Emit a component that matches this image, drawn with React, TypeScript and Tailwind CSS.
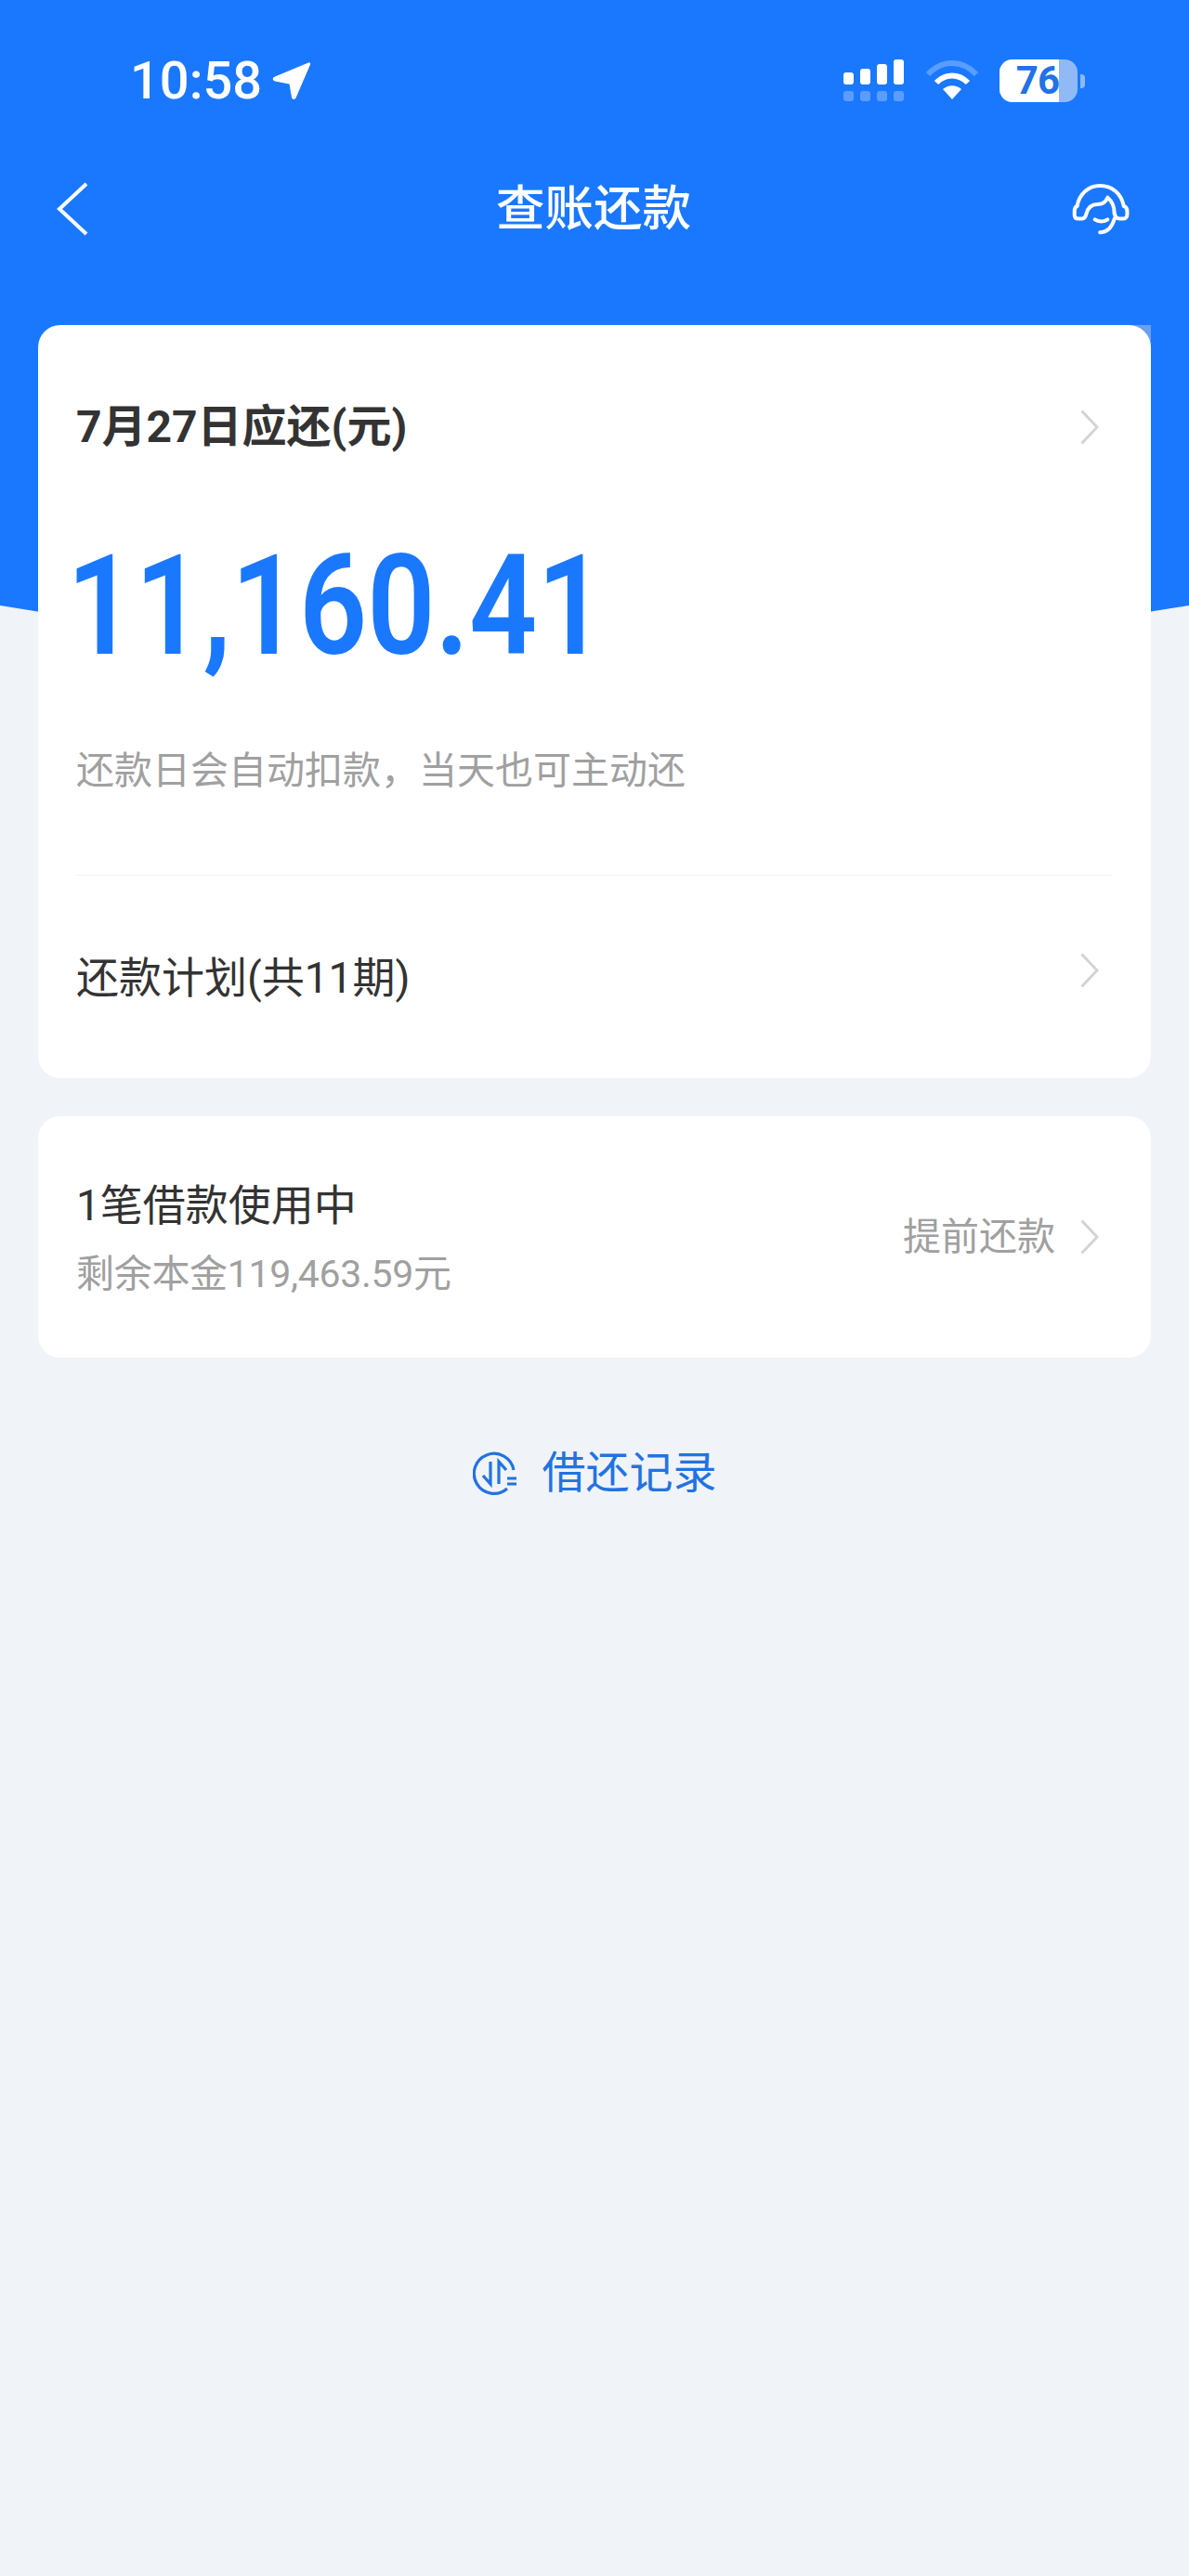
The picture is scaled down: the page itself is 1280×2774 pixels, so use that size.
function Chevron({ className }: { className?: string }) {
  return (
    <svg width="20" height="38" viewBox="0 0 20 38" fill="none" className={className}>
      <path d="M1.5 1.5L18 19L1.5 36.5" stroke="#d4d4d4" strokeWidth="3" />
    </svg>
  )
}

function StatusBar() {
  return (
    <div className="flex h-[46px] items-center justify-between pl-[140px] pr-[112px] text-white">
      <div className="flex items-center gap-[11px]">
        <span className="text-[56px] font-medium leading-[46px]">10:58</span>
        <svg width="42" height="42" viewBox="0 0 42 42" fill="white">
          <path d="M39 1.5C40.5 1 41.5 2 41 3.5L25.5 39.5C24.5 41.5 21.5 41.5 21 39L18.5 24.5L3 21.5C0 20.5 0 17.5 3 16.5Z" />
        </svg>
      </div>
      <div className="flex items-center">
        <svg width="66" height="46" viewBox="0 0 66 46" fill="white">
          <rect x="1" y="14" width="11" height="13" rx="3" />
          <rect x="19" y="10" width="11" height="17" rx="3" />
          <rect x="37" y="5" width="11" height="22" rx="3" />
          <rect x="55" y="0" width="11" height="27" rx="3" />
          <g opacity="0.28">
            <rect x="1" y="34" width="11" height="11" rx="3" />
            <rect x="19" y="34" width="11" height="11" rx="3" />
            <rect x="37" y="34" width="11" height="11" rx="3" />
            <rect x="55" y="34" width="11" height="11" rx="3" />
          </g>
        </svg>
        <svg width="58" height="44" viewBox="0 0 58 44" fill="none" className="ml-[23px]">
          <path d="M3 15C18 -1 40 -1 55 15" stroke="white" strokeOpacity="0.28" strokeWidth="6" />
          <path d="M12 24C22 14 36 14 46 24" stroke="white" strokeWidth="6" />
          <path d="M29 42L19 31C25 26 33 26 39 31Z" fill="white" />
        </svg>
        <div className="ml-[22px] flex h-[46px] w-[84px] rounded-[14px] bg-[#90b9f6]">
          <div className="flex h-full w-[64px] items-center justify-end rounded-l-[14px] bg-white">
            <span className="text-[42px] font-bold leading-[46px] tracking-[-1px] text-[#2272e6]">76</span>
          </div>
        </div>
        <div className="ml-[3px] h-[15px] w-[5px] rounded-r-[4px] bg-[#90b9f6]" />
      </div>
    </div>
  )
}

function NavBar() {
  return (
    <div className="mt-[85px] flex h-[60px] items-center justify-between pl-[60px] pr-[62px] text-white">
      <div className="w-[64px]">
        <svg width="36" height="58" viewBox="0 0 36 58" fill="none">
          <path d="M33 2L4 29L33 56" stroke="white" strokeWidth="4" />
        </svg>
      </div>
      <h1 className="text-[52.5px] font-medium leading-[60px]">查账还款</h1>
      <svg width="64" height="57" viewBox="0 0 70 62" fill="none" stroke="white" strokeWidth="4.4" strokeLinecap="round" strokeLinejoin="round">
        <path d="M6 27C9 12 20 3 33 3C47 3 58 12 61 27" />
        <path d="M6 27C4 28 3 30 3 33V38C3 41 5 42 8 42H12C15 42 16 40 17 36C19 28 24 25 30 25C36 25 40 22 42 17C47 21 50 27 50 36" />
        <path d="M61 27C64 28 65 30 65 33V37C65 40 63 42 60 42H56C53 42 51 40 50 36" />
        <path d="M50 42C47 52 42 58 33 58" />
        <path d="M27 43C31 46 38 46 42 43" />
      </svg>
    </div>
  )
}

function AmountCard() {
  return (
    <section className="relative rounded-[24px] bg-white px-[41px] pb-[78px] pt-[80px]">
      <div className="flex h-[60px] items-center justify-between">
        <span className="text-[48px] font-bold leading-[60px] text-[#333333]">7月27日应还(元)</span>
        <Chevron className="mr-[15px]" />
      </div>
      <div className="ml-[-10px] mt-[83px] h-[160px] origin-left scale-x-[.855] text-[150px] font-semibold leading-[160px] text-[#1a78ff]">
        11,160.41
      </div>
      <p className="mt-[67px] h-[60px] text-[41px] leading-[60px] text-[#a0a0a0]">还款日会自动扣款，当天也可主动还</p>
      <div className="mt-[82px] h-px bg-[#f2f2f2]" />
      <div className="mt-[80px] flex h-[60px] items-center justify-between">
        <span className="text-[46px] leading-[60px] text-[#333333]">还款计划(共11期)</span>
        <Chevron className="mb-[16px] mr-[15px]" />
      </div>
    </section>
  )
}

function LoanCard() {
  return (
    <section className="mt-[41px] flex h-[260px] items-center justify-between rounded-[24px] bg-white px-[41px]">
      <div className="mt-[6px]">
        <div className="h-[60px] text-[46px] leading-[60px] text-[#333333]">1笔借款使用中</div>
        <div className="mt-[14px] h-[60px] text-[41px] leading-[60px] tracking-[-0.3px] text-[#a0a0a0]">剩余本金119,463.59元</div>
      </div>
      <div className="flex items-center">
        <span className="text-[41px] leading-[60px] text-[#a0a0a0]">提前还款</span>
        <Chevron className="ml-[27px] mr-[15px]" />
      </div>
    </section>
  )
}

export default function App() {
  return (
    <div className="relative h-[2774px] overflow-hidden bg-[#f0f3f8] font-['Roboto','Noto_Sans_CJK_SC',sans-serif]">
      {/* blue curved backdrop */}
      <svg width="1280" height="720" viewBox="0 0 1280 720" className="absolute left-0 top-0">
        <path d="M0 0H1280V652Q640 761 0 652Z" fill="#1a78ff" />
        <rect x="1212" y="350" width="27" height="27" fill="#6a9fee" />
      </svg>
      <div className="relative">
        <div className="pt-[64px]">
          <StatusBar />
          <NavBar />
        </div>
        <main className="mt-[95px] px-[41px]">
          <AmountCard />
          <LoanCard />
          <div className="mt-[94px] flex h-[60px] items-center justify-center gap-[27px]">
            <svg width="48" height="48" viewBox="0 0 48 48" fill="none" stroke="#2273e0" strokeWidth="3.2">
              <path d="M44 21A21.5 21.5 0 1 0 37 41" />
              <path d="M19 12V36L11 27" />
              <path d="M28 36V12L36 21" />
              <path d="M37 30H47M37 36H47" />
            </svg>
            <span className="text-[47px] leading-[60px] text-[#2273e0]">借还记录</span>
          </div>
        </main>
      </div>
    </div>
  )
}
